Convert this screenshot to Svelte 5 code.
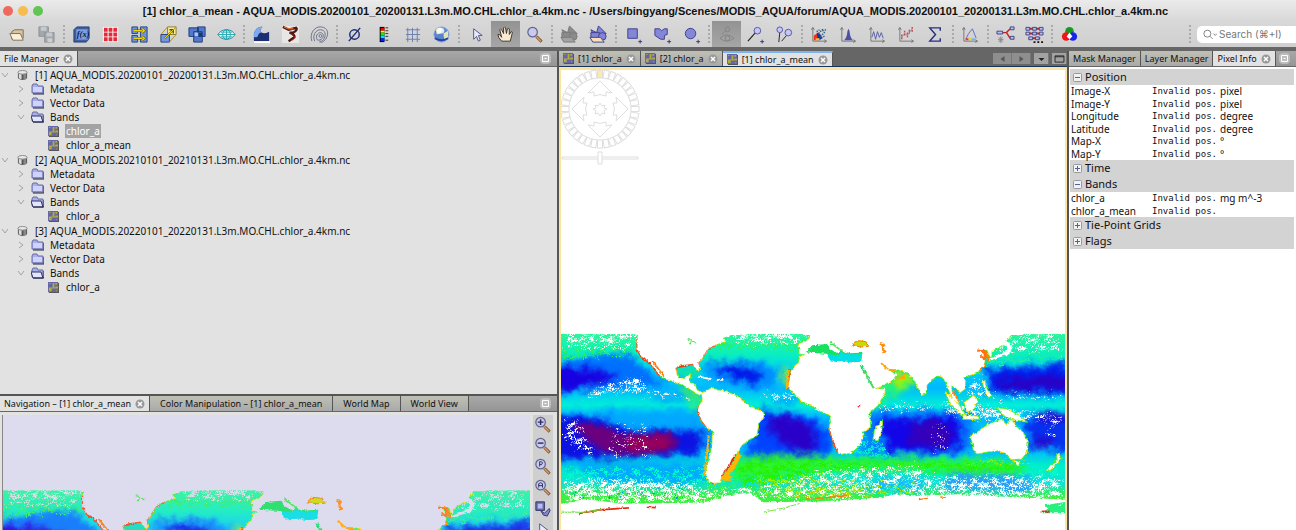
<script lang="ts">
  const file = (year: number) => `AQUA_MODIS.${year}0101_${year}0131.L3m.MO.CHL.chlor_a.4km.nc`;
  const title = `[1] chlor_a_mean - ${file(2020)} - /Users/bingyang/Scenes/MODIS_AQUA/forum/${file(2020)}`;

  const products = [
    { id: 1, name: file(2020), bands: ['chlor_a', 'chlor_a_mean'] },
    { id: 2, name: file(2021), bands: ['chlor_a'] },
    { id: 3, name: file(2022), bands: ['chlor_a'] }
  ];

  let selected = $state('1/chlor_a');
  let search = $state('');

  const pixelInfo = [
    {
      name: 'Position',
      rows: [
        ['Image-X', 'pixel'],
        ['Image-Y', 'pixel'],
        ['Longitude', 'degree'],
        ['Latitude', 'degree'],
        ['Map-X', '°'],
        ['Map-Y', '°']
      ]
    },
    { name: 'Time', rows: [] },
    { name: 'Bands', rows: [['chlor_a', 'mg m^-3'], ['chlor_a_mean', '']] },
    { name: 'Tie-Point Grids', rows: [] },
    { name: 'Flags', rows: [] }
  ];

  const axes = '<path d="M3 3v14h14M1.500 5L3 2.500 4.500 5M15 15.500l2.500 1.500-2.500 1.500" fill="none" stroke="#777"/>';
  const lens = (mark: string) =>
    `<path d="M12 12l5.500 5.500" stroke="#7b4a2a" stroke-width="3"/><path d="M12 12l5 5" stroke="#d9a070" stroke-width="1.500"/><circle cx="8" cy="7.500" r="5" fill="#c9caec" stroke="#62648c" stroke-width="1.300"/>${mark}`;
  const shapes = (main: string, edge: string, tray: string) =>
    `<path d="M2 5l6 3 2-7 8 8H4z" fill="${main}" stroke="${edge}"/><path d="M2 8h9v6H2z" fill="${main}" stroke="${edge}"/><circle cx="14" cy="12" r="4" fill="${main}" stroke="${edge}"/><path d="M1 13h11l4 5H4z" fill="${tray}" stroke="${edge}"/>`;
  const plus = '<path d="M15 17.500h4M17 15.500v4" stroke="#33357a"/>';

  const icons: Record<string, string> = {
    open: '<path d="M4 15V7l3-2h9v9" fill="#d9c3a0" stroke="#7c705c"/><path d="M2 9h11l3 7H5z" fill="#fbf0d8" stroke="#7c705c"/>',
    save: '<g fill="#a3a8ad" stroke="#90959a"><path d="M2 2h10v10H2z"/><path d="M8 8h10v10H8z"/></g><path d="M4 2h6v4H4zM10 8h6v4h-6z" fill="#c5cace"/><path d="M11 14h5v4h-5z" fill="#ccd0d3"/>',
    math: '<path d="M2 5l3-3h13v12l-3 4H2z" fill="#3d5c9c" stroke="#28427c"/><path d="M4 4h13v12H4z" fill="#7c9fe0" stroke="#3c5a9c"/><text x="5" y="13" font-size="9" font-style="italic" font-weight="bold" font-family="Liberation Serif, serif" fill="#10204c">f(x)</text>',
    mosaic: '<path d="M2 2h16v16H2z" fill="#fff"/><g fill="#e22c38"><path d="M3 3h4v4H3zM8 3h4v4H8zM13 3h4v4h-4zM3 8h4v4H3zM8 8h4v4H8zM13 8h4v4h-4zM3 13h4v4H3zM8 13h4v4H8zM13 13h4v4h-4z"/></g>',
    collocate: '<g fill="#6f93dc" stroke="#27427e"><path d="M2 2h6v7H2zM2 11h6v7H2zM11 2h7v16h-7z"/></g><path d="M4 6h9m0-2l2 2-2 2M4 14h9m0-2l2 2-2 2" fill="none" stroke="#5f5200" stroke-width="2.500"/><path d="M4 6h9m0-2l2 2-2 2M4 14h9m0-2l2 2-2 2" fill="none" stroke="#f5d800" stroke-width="1.500"/>',
    reproject: '<path d="M9 2h9v8h-9z" fill="#f7ec9a" stroke="#8a7c30"/><path d="M2 10h9v8H2z" fill="#7197e6" stroke="#27427e"/><path d="M2 10l7-8M11 18l7-8M11 10l7-8" stroke="#a8922a"/><path d="M6 14l9-9m0 0h-4m4 0v4" stroke="#5f5200" stroke-width="1.500" fill="none"/><path d="M6 14l9-9" stroke="#ffe100"/>',
    subset: '<g fill="#5379ca" stroke="#1d3b80"><path d="M1 3h10v9H1zM10 2h8v10h-8zM6 7h9v11H6z"/></g><path d="M7 8h4v4H7z" fill="#a9c5ff"/><path d="M11 8h4v4h-4z" fill="#183879"/>',
    resample: '<path d="M1 10Q4 5 10 5t9 5q-3 5-9 5t-9-5z" fill="#e8ffff" stroke="#228a96"/><ellipse cx="10" cy="10" rx="4" ry="5" fill="none" stroke="#169eab"/><path d="M1 10h18M4 7.500h12M4 12.500h12M10 5v10" stroke="#26a6b1" fill="none"/>',
    water: '<path d="M2 17V9q3-8 9-7-4 3-1 6 3 2 8-1v10z" fill="#1c2f74"/><path d="M2 9q3-8 9-7-4 3-1 6-3 0-4 4-3 2-4 0z" fill="#7ea9ee"/><path d="M2 17h17v2H2z" fill="#fff"/>',
    cloud: '<path d="M1 1h18v18H1z" fill="#e9e6e6"/><path d="M2 2l6 3 8-2q2 2-3 5l-4 0q6 2 5 5l-6 4" fill="none" stroke="#4c1810" stroke-width="2.500"/><path d="M3 2l5 2 5 0" stroke="#d06a33" stroke-width="1.500" fill="none"/><path d="M10 9l5 4-3 3" fill="none" stroke="#bb1d24"/>',
    contour: '<g fill="none" stroke="#697186"><path d="M2 17C-1 9 5 1 12 2s8 7 5 12-5 4-7 4"/><path d="M5 17C2 11 6 5 11 5s6 5 4 9-4 3-5 3"/><path d="M8 16c-3-4 0-8 3-8s4 4 2 6-4 2-5 2z"/><circle cx="11" cy="11.500" r="1.500"/></g>',
    nodata: '<circle cx="10" cy="10" r="5" fill="none" stroke="#1e2c75" stroke-width="1.500"/><path d="M4 17L16 3" stroke="#1e2c75" stroke-width="1.500"/>',
    colorbar: '<path d="M6 2h5v16H6z"/><path d="M7 3h4v3H7z" fill="#f00"/><path d="M7 6h4v2H7z" fill="#ff0"/><path d="M7 8h4v3H7z" fill="#20e020"/><path d="M7 11h4v3H7z" fill="#0df"/><path d="M7 14h4v3H7z" fill="#02f"/><path d="M12 3h3M12 6h3M12 9h3M12 12h3M12 16h3" stroke="#333"/>',
    grid: '<path d="M3 5h15M3 10h15M3 15h15M5 3v15M10 3v15M15 3v15" stroke="#6c7fae"/>',
    globe: '<circle cx="10" cy="10" r="8" fill="#5a82d0" stroke="#8fa5d8"/><path d="M4 5q5-5 7 0l-2 4-4 1zM12 9l5-3v7l-4 3z" fill="#dfe8ae"/><ellipse cx="9" cy="6" rx="4" ry="3" fill="#fff" opacity=".8"/><path d="M3 14q7 4 14 0" stroke="#2244a0" fill="none" stroke-width="2"/>',
    pointer: '<path d="M7 4v11l3-3 2 5 2-1-2-5h4z" fill="#e9e9fb" stroke="#54567f"/>',
    hand: '<path d="M6 17q-4-4-4-7 2-1 4 3L4 5q1-2 2 0l2 4V3q1-2 2 0l1 6 1-5q2-1 2 0v6l2-3q2 0 1 2l-2 8z" fill="#f8ead3" stroke="#3c352c"/>',
    zoom: lens(''),
    importGrey: shapes('#8b8b8b', '#7a7a7a', '#a2a2a2'),
    importShape: shapes('#8083d8', '#3e408c', '#f8e0b4'),
    rect: '<path d="M4 4h10v10H4z" fill="#8486d8" stroke="#3e408c"/>' + plus,
    polygon: '<path d="M2 4h5l2 2 3-2h3v6l-3 1v4H8l-6-4z" fill="#8486d8" stroke="#3e408c"/>' + plus,
    circle: '<circle cx="9" cy="9" r="5.500" fill="#8486d8" stroke="#3e408c"/>' + plus,
    eye: '<g fill="none" stroke="#858585"><path d="M5 10l5-5"/><circle cx="11" cy="4.500" r="2.500"/><path d="M3 14q7-7 15 0-8 6-15 0z"/><circle cx="11" cy="14" r="2.500"/></g>',
    pin: '<path d="M2 17l8-9" stroke="#222" stroke-width="1.200"/><circle cx="12" cy="6" r="3.500" fill="#c4c6f6" stroke="#5254a2"/>' + plus,
    pins: '<path d="M4 18l1-10M7 17l6-7" stroke="#222"/><circle cx="5" cy="5" r="3" fill="#c4c6f6" stroke="#5254a2"/><circle cx="14" cy="8" r="3.500" fill="#c4c6f6" stroke="#5254a2"/>',
    scatter: axes + '<path d="M4 11l5-3 3 4-4 4H4z" fill="#f33116"/><path d="M7 8l4 2 2 4-3 2H8z" fill="#1838a4"/><path d="M6 14h4v2H6z" fill="#ffc41b"/><path d="M9 9l5-5M11 12l5-5M13 6l4-1M12 14l4-3M7 7l3-2" stroke="#2c5f84" stroke-width="1.500" stroke-dasharray="1.500 1"/>',
    histogram: axes + '<path d="M5 16q3-1 4-10l1-2 1 2q1 9 4 10z" fill="#4c51a8"/>',
    profile: axes + '<path d="M4 13l2-6 2 8 2-8 2 6 2-5 2 6" fill="none" stroke="#5a60a8"/>',
    spectrum: axes + '<path d="M5 13l3-4 3 2 5-7" fill="none" stroke="#999"/><path d="M5 10v5M8 6v6M11 8v6M13 5v4M16 2v5" fill="none" stroke="#c04a55" stroke-width="1.500" stroke-dasharray="2 1"/>',
    sigma: '<path d="M15 6V3H4l6 7-6 7h11v-3" fill="none" stroke="#25307e" stroke-width="1.500"/>',
    density: axes + '<path d="M5 15l3-6 4-5 4 10" fill="none" stroke="#6767d0"/><path d="M5 15h3" stroke="#e33" stroke-width="2"/><path d="M8 15h3" stroke="#ed0" stroke-width="2"/><path d="M11 15h4" stroke="#6bf" stroke-width="2"/>',
    graph: '<path d="M7 8h4l4-4M11 8l4 6" stroke="#c52020" stroke-width="1.500" fill="none"/><g fill="#b9bdf2" stroke="#414683"><path d="M1 6.500h6v3H1zM15 2h4v3h-4zM15 12h4v3h-4z"/></g><path d="M5 12v7M2 15.500h6M3 13l4 5M7 13l-4 5" stroke="#888"/>',
    batch: '<path d="M2 4h15M2 9h15M4 14h12" stroke="#c52020" stroke-width="2"/><g fill="#b9bdf2" stroke="#414683"><path d="M1 2.500h4v3H1zM8 2.500h4v3H8zM15 2.500h4v3h-4zM1 7.500h4v3H1zM8 7.500h4v3H8zM15 7.500h4v3h-4zM4 12.500h4v3H4zM11 12.500h4v3h-4z"/></g><path d="M9 18h10" stroke="#111" stroke-width="2" stroke-dasharray="2"/>',
    rgb: '<circle cx="10" cy="6.500" r="4.500" fill="#159a20"/><circle cx="6.500" cy="12" r="4.500" fill="#f01616"/><circle cx="13.500" cy="12" r="4.500" fill="#1724ee"/><path d="M10 8l3 4-3 3-3-3z" fill="#fff"/>'
  };

  const toolbar = [
    ['open', 'save'],
    ['math', 'mosaic', 'collocate', 'reproject', 'subset', 'resample'],
    ['water', 'cloud', 'contour'],
    ['nodata', 'colorbar', 'grid', 'globe'],
    ['pointer', 'hand', 'zoom'],
    ['importGrey', 'importShape'],
    ['rect', 'polygon', 'circle'],
    ['eye', 'pin', 'pins'],
    ['scatter', 'histogram', 'profile', 'spectrum', 'sigma'],
    ['density'],
    ['graph', 'batch'],
    ['rgb']
  ];

  const navTools = [
    ['Zoom in', lens('<path d="M5 7.500h6M8 4.500v6" stroke="#2c2e60" stroke-width="1.500"/>')],
    ['Zoom out', lens('<path d="M5 7.500h6" stroke="#2c2e60" stroke-width="1.500"/>')],
    ['Actual pixels', lens('<path d="M7 10V5h2q2 1 0 3H7" stroke="#2c2e60" fill="none"/>')],
    ['Zoom all', lens('<path d="M6 10V6l2-1 2 1v4M6 8h4" stroke="#2c2e60" fill="none"/>')],
    ['Synchronise', '<path d="M3 3h9v9H3z" fill="#6b6eb8" stroke="#2f3163"/><path d="M5 5h5v5H5z" fill="#b9bbe8"/><path d="M8 12l4 3 5-5 1 2-3 6-4-1z" fill="#8285cf" stroke="#37396e"/>'],
    ['Cursor', icons.pointer]
  ];

  const tickAngles = Array.from({ length: 36 }, (_, i) => i * 10);
</script>

{#snippet closeIcon()}
  <svg class="close" viewBox="0 0 10 10" aria-hidden="true">
    <circle cx="5" cy="5" r="4.500" fill="#999" />
    <path d="M3 3l4 4M7 3l-4 4" stroke="#fff" stroke-width="1.500" />
  </svg>
{/snippet}

{#snippet minimise()}
  <button class="minimise" aria-label="Minimise window group">
    <svg viewBox="0 0 11 11"><rect width="11" height="11" rx="4" fill="#bdbdbd" /><path d="M2.500 2.500h6v6h-6zM4.500 5.500h2" fill="none" stroke="#fff" /></svg>
  </button>
{/snippet}

{#snippet bandIcon()}
  <svg class="band-icon" viewBox="0 0 12 12" aria-hidden="true">
    <path d="M1 1h11v11H1z" fill="#555" />
    <path d="M0 0h11v11H0z" fill="#6467a6" />
    <path d="M1 6h3v4H1zM5 1h2v5H5zM8 5h3v2H8zM8 1h2v2H8zM4 6h4v1H4zM1 1h2v1H1zM9 9h1v1H9z" fill="#b5aa3c" />
  </svg>
{/snippet}

{#snippet folder(open: boolean)}
  <svg class="folder" viewBox="0 0 13 12" aria-hidden="true">
    <path d="M1 10V3l1-2h4l1 2h5v7z" fill="#a9aee8" stroke="#6a6da5" />
    {#if open}
      <path d="M0 5h10l2 6H2z" fill="#e1e5ff" stroke="#31345f" />
    {:else}
      <path d="M2 4h9v5H2z" fill="#cdd2ff" />
    {/if}
    <path d="M2 11h11V4" fill="none" stroke="#20223f" />
  </svg>
{/snippet}

{#snippet chevron(open: boolean)}
  <svg class="chevron" viewBox="0 0 8 8" aria-hidden="true">
    <path d={open ? 'M1 2l3 4 3-4' : 'M2 1l4 3-4 3'} fill="none" stroke="#a3a3a3" />
  </svg>
{/snippet}

{#snippet worldMap()}
  <svg class="world" viewBox="0 0 1521 615" role="img" aria-label="Chlorophyll concentration map">
    <rect y="24" width="1521" height="512" fill="url(#ocean)" />
    <g filter="url(#soft)">
      <path d="M-30 120Q100 75 200 85L290 150 310 185 120 180-30 215z" fill="#0070ff" />
      <path d="M-30 125Q80 120 170 150 120 190-30 200z" fill="#1800e0" />
      <path d="M430 120Q540 85 660 130L640 185Q520 190 430 140z" fill="#008cff" />
      <path d="M455 120Q530 105 610 145 590 185 530 165z" fill="#0018e8" />
      <path d="M1280 130L1551 112V208L1300 205z" fill="#0020ee" />
      <path d="M1300 165L1551 145V188L1340 195z" fill="#2a00c4" />
      <path d="M280 205h140v20H280zM640 210h70v25h-70z" fill="#00a5ff" />
      <path d="M-30 255h440L450 310V340L440 390H-30z" fill="#00a8ff" />
      <path d="M-30 275Q140 265 200 320L420 315Q450 350 410 385L-30 405z" fill="#0c12e2" />
      <path d="M-30 410H460L440 475H160z" fill="#00a8ff" />
      <path d="M590 250L760 275 815 320 820 390H555L570 345z" fill="#0043ff" />
      <path d="M622 270Q700 265 770 310V385Q690 385 630 320z" fill="#2a00c8" />
      <path d="M925 250L1250 255 1235 385 900 390z" fill="#0080ff" />
      <path d="M955 285L1200 270 1210 370Q1140 385 990 380z" fill="#1205e8" />
      <path d="M1050 290h100q60 50 20 75l-110-5z" fill="#3500bb" />
      <path d="M1390 280L1551 265V375L1415 370z" fill="#0630ee" />
      <path d="M1440 260h111v25h-111zM1425 340h60v25h-60z" fill="#2a00c8" />
      <path d="M1180 430q100-10 260 40l-30 35-260-15z" fill="#2a9cff" />
      <path d="M960 460h130v40H900z" fill="#18b6ff" />
      <path d="M540 400q100-15 260 0h290l230 5 90 30-50 15-400-22-400 30-70 20z" fill="#2df52b" />
      <path d="M960 160L1012 147 1070 165 1060 190 1000 210 950 250z" fill="#22f080" />
      <path d="M985 150l60-15 30 25-50 20z" fill="#a8f000" />
      <path d="M340 175l60 15 40 60-10 40-30-60z" fill="#3af060" />
      <path d="M660 140l32-5-5 50z" fill="#b0f000" />
      <path d="M350 125h60v25h-60z" fill="#10e890" />
    </g>
    <g filter="url(#softer)">
      <path d="M40 290Q120 290 180 325L330 322Q370 350 330 380L180 388Q90 380 40 300z" fill="#6b007e" />
      <path d="M200 335h110q40 18 0 35l-100 10z" fill="#96005c" />
    </g>

    <g filter="url(#speckle)">
      <path d="M0 20H230V90L120 100 0 120zM510 24h220v60L600 75 430 90z" fill="#28f060" fill-opacity=".9" />
      <path d="M1290 60L1521 30V110L1270 130z" fill="#1cf0a0" fill-opacity=".9" />
      <path d="M0 420H1521V530H0z" fill="#00ffc8" fill-opacity=".9" />
      <path d="M0 480H420L540 480V540H0z" fill="#40f020" fill-opacity=".95" />
      <path d="M510 400L1400 405V440L760 455 1000 520H560z" fill="#22f000" />
      <path d="M880 320l80 20 60 60H850z" fill="#00ecd0" />
    </g>
    <g filter="url(#speckle2)">
      <path d="M560 440L800 440 1090 470 1060 520H600z" fill="#9cf000" fill-opacity=".85" />
      <path d="M1230 395h190v30h-190zM750 405h180v14H750z" fill="#a4ee00" fill-opacity=".85" />
      <path d="M700 508h240v16H700z" fill="#ffb800" fill-opacity=".95" />
      <path d="M985 140l70-5 20 25-60 20zM340 175h60v22z" fill="#ffa800" fill-opacity=".85" />
      <path d="M20 490H400V530H20z" fill="#0090ff" fill-opacity=".7" />
    </g>
    <g fill="currentColor" filter="url(#speckle)">
      <path d="M0 10H1521V36H0z" />
      <path d="M0 30H225V75H0zM520 30H725V60H520zM1280 40H1521V85H1290z" fill-opacity=".88" />
      <path d="M80 190L240 140 260 185 420 215V230L200 205 60 220z" />
      <path d="M0 270l60 10 20 60 40 50-40 10L0 340z" fill-opacity=".9" />
      <path d="M570 205L700 195 720 230 620 225z" />
      <path d="M570 205L700 195 720 230 620 225z" />
      <path d="M0 460L150 450 420 470 470 495 430 540H0z" />
      <path d="M420 490L640 470 780 430 1090 410 1110 450 900 530H420z" fill-opacity=".9" />
      <path d="M1080 450H1521V530H1000z" fill-opacity=".95" />
      <path d="M1150 220L1330 240 1521 270V300L1400 290 1250 290 1150 265z" />
      <path d="M1290 200H1521V225H1300zM1220 160l60-10 10 70-60 10z" fill-opacity=".9" />
      <path d="M950 230h180v35H940z" fill-opacity=".85" />
      <path d="M1110 290h60v90h-60z" fill-opacity=".65" />
      <path d="M1440 320l50-20 20 30-40 10z" fill-opacity=".9" />
      <path d="M150 290H280V400H120z" fill-opacity=".65" />
    </g>

    <!-- coast halo, then the land itself -->
    <g fill="none" filter="url(#rough)">
      <use href="#land" stroke="#3df02a" stroke-width="7" />
      <use href="#land" stroke="#ffd900" stroke-width="6" stroke-dasharray="10 22" />
      <path d="M231 40v32l12 22 20 12 36 44M415 125l-2-16 14-16 12-22 28-16M345 160v-34l55-12M420 238l-8 18 14 30 14 18M690 130l-5 58M810 308l12 40 16 36M517 400l-14 26-10 10-10 24-30 16" stroke="#f53a10" stroke-width="6" />
      <path d="M688 132l-7 55M446 330l-6 60-8 60M536 215l24 24" stroke="#ffb400" stroke-width="6" />
      <path d="M540 385q-30 60-50 75h24" stroke="#ffb400" stroke-width="14" />
      <path d="M526 388l-24 45" stroke="#e31a10" stroke-width="4" />
      <path d="M990 134l-25-20M1280 75l12 30M1262 132l20-16M1180 195l18 34" stroke="#ff8200" stroke-width="8" />
    </g>
    <g fill="currentColor" filter="url(#rough)">
      <use href="#land" stroke="currentColor" />
      <path d="M-20 545L70 522 200 538 430 533 500 512 570 502 610 532 780 530 960 518 1010 508 1080 512 1200 508 1541 525V640H-20z" />
      <path d="M415 150l40 8-4 5-40-8zM470 160h20v5h-20z" />
      <path d="M1340 42l25 20-15 25-30 8-25 10 2-8 25-10 22-10 4-14-14-12z" />
    </g>
    <g filter="url(#rough)">
      <path d="M738 80l20-22 45-4 10 16 22 12 12-8 25 8 38-2-4 26-30 2-25-4-35 2-15-22z" fill="#18e060" />
      <path d="M800 84l30 4 15-8 30 6 34-2-4 24-30 2-25-4-35 2z" fill="#00dfe5" />
      <path d="M812 48l38 30" stroke="#40e850" stroke-width="5" />
      <path d="M880 60l10-16 30 3 12 14-25 2z" fill="#c8dc00" stroke="#f47a10" stroke-width="3" />
      <path d="M962 48l16 6-4 12 10 14-14 2-2-16z" fill="#ff8b10" />
      <path d="M904 118l40 70" stroke="#18dc70" stroke-width="6" />
      <path d="M916 140l28 46" stroke="#ffb800" stroke-width="2" />
      <path d="M966 112l22 20 24 2" fill="none" stroke="#ffa500" stroke-width="6" />
      <path d="M895 243l8-6-2 9z" fill="#e22" stroke="#e22" />
      <path d="M378 38l14 4M390 56l4-14 14 10" fill="none" stroke="#42e04c" stroke-width="3" />
      <path d="M1256 74l22 2 2 24-14-10" fill="none" stroke="#ff7010" stroke-width="6" />
      <path d="M275 105l35 45" stroke="#ff7a00" stroke-width="5" />
      <path d="M55 566l60-11 90-6M258 547l28 1" stroke="#e62c10" stroke-width="5" fill="none" />
      <path d="M0 562h70l50-8M610 562l60-12 50-14" stroke="#6ee040" stroke-width="3" fill="none" />
      <path d="M1450 565l20-14-10-10 61-10v34z" fill="#25f080" />
      <path d="M1450 560h25" stroke="#f31f10" stroke-width="6" />
      <path d="M740 522l60-4 70-6M1080 524l24-4M1145 516l16 1" stroke="#ff7a00" stroke-width="4" fill="none" />
    </g>
    <g fill="currentColor" filter="url(#speckle)">
      <path d="M1455 552L1521 525V550z" />
      <path d="M20 525h420v16H20z" />
    </g>
    <path d="M225 0h315v27H225zM730 0h665v27H730z" fill="currentColor" />
  </svg>
{/snippet}

<svg class="defs" aria-hidden="true">
  <defs>
    <linearGradient id="ocean" x1="0" y1="0" x2="0" y2="1">
      <stop offset="0" stop-color="#2af59a" />
      <stop offset=".12" stop-color="#0aefc0" />
      <stop offset=".22" stop-color="#00d0f5" />
      <stop offset=".32" stop-color="#00b8ff" />
      <stop offset=".42" stop-color="#00f0d8" />
      <stop offset=".5" stop-color="#00baff" />
      <stop offset=".7" stop-color="#00c2f8" />
      <stop offset=".78" stop-color="#00f0c8" />
      <stop offset=".88" stop-color="#10e0d8" />
      <stop offset=".96" stop-color="#3cf040" />
    </linearGradient>
    <filter id="soft" x="-5%" y="-5%" width="110%" height="110%" color-interpolation-filters="sRGB">
      <feTurbulence type="fractalNoise" baseFrequency=".03" numOctaves="4" seed="4" result="n" />
      <feGaussianBlur in="SourceGraphic" stdDeviation="11" />
      <feDisplacementMap in2="n" scale="40" xChannelSelector="R" yChannelSelector="G" />
    </filter>
    <filter id="softer" x="-15%" y="-25%" width="130%" height="150%" color-interpolation-filters="sRGB">
      <feTurbulence type="fractalNoise" baseFrequency=".05" numOctaves="4" seed="8" result="n" />
      <feGaussianBlur in="SourceGraphic" stdDeviation="8" />
      <feDisplacementMap in2="n" scale="30" xChannelSelector="R" yChannelSelector="G" />
    </filter>
    <filter id="rough" x="-5%" y="-5%" width="110%" height="110%" color-interpolation-filters="sRGB">
      <feTurbulence type="fractalNoise" baseFrequency=".12" numOctaves="2" seed="3" result="n" />
      <feDisplacementMap in="SourceGraphic" in2="n" scale="10" xChannelSelector="R" yChannelSelector="G" />
    </filter>
    {#each [['speckle', 5], ['speckle2', 12]] as [id, seed]}
      <filter {id} x="-5%" y="-10%" width="110%" height="120%" color-interpolation-filters="sRGB">
        <feTurbulence type="fractalNoise" baseFrequency=".05 .08" numOctaves="5" {seed} result="wide" />
        <feTurbulence type="fractalNoise" baseFrequency=".23" numOctaves="2" {seed} result="fine" />
        <feComposite in="wide" in2="fine" operator="arithmetic" k1="0" k2=".5" k3=".5" k4="0" result="n" />
        <feGaussianBlur in="SourceGraphic" stdDeviation="9" result="b" />
        <feComposite in="b" in2="n" operator="arithmetic" k1="0" k2=".2" k3=".6" k4="0" />
        <feComponentTransfer result="a"><feFuncA type="linear" slope="14" intercept="-6.600" /></feComponentTransfer>
        <feComponentTransfer in="b" result="c"><feFuncA type="linear" slope="20" intercept="0" /></feComponentTransfer>
        <feComposite in="c" in2="a" operator="in" />
      </filter>
    {/each}
    <path
      id="land"
      d="M232 5L231 70 243 92 262 103 300 150 315 158 370 178 392 192 418 208 428 203 410 194 404 178 388 168 388 148 372 160 352 157 345 127 362 118 398 114 410 132 418 130 414 110 426 98 440 72 462 58 495 46 488 36 512 28 512 5z
      M425 205L455 187 475 195 500 197 515 207 535 213 560 237 585 250 610 262 611 275 595 295 590 330 562 345 545 360 530 385 515 400 505 425 492 435 484 455 478 472 455 473 441 462 438 440 446 410 455 370 460 318 440 305 425 285 413 255 417 240 428 225z
      M755 5L750 40 718 55 720 82 738 86 720 95 718 110 695 135 690 160 686 185 700 200 725 225 760 242 790 260 812 268 815 290 810 310 822 345 838 385 875 383 895 365 908 345 910 320 933 305 930 262 955 240 975 205 978 190 945 190 965 182 1000 163 1012 147 990 135 1012 130 1045 140 1062 155 1075 180 1090 207 1101 203 1102 180 1120 160 1135 150 1150 152 1165 175 1176 206 1195 237 1200 232 1180 200 1176 178 1190 185 1205 200 1218 190 1220 165 1213 152 1230 150 1260 135 1275 120 1280 100 1268 72 1285 70 1298 95 1300 75 1330 60 1350 38 1370 5z
      M968 290L966 318 956 345 944 340 948 312z
      M1238 332L1260 320 1285 300 1310 290 1330 283 1345 300 1358 283 1375 305 1395 325 1408 350 1405 380 1390 400 1360 402 1345 385 1320 375 1290 378 1255 385 1247 375z
      M1370 410l14 2-6 10z
      M1218 232l25-20 14 10-12 30-20 5z
      M1165 205l30 25 22 35-10 2-35-40zM1215 270l45 5v5h-45zM1318 248l30 4 35 20 18 15-30-5-28-8z
      M1276 165l10 30 10 15-6 4-14-30z
      M1498 388l10 10-8 10zM1496 405l4 5-25 24-10 2z"
    />
  </defs>
</svg>

<div class="window">
  <header>
    <div class="lights"><i class="red"></i><i class="amber"></i><i class="green"></i></div>
    <h1>{title}</h1>
  </header>

  <div class="toolbar" role="toolbar" aria-label="Tools">
    {#each toolbar as group, i}
      {#if i > 0}<span class="separator"></span>{/if}
      {#each group as name}
        <button class="tool" class:active={name === 'hand' || name === 'eye'} aria-label={name}>
          <svg viewBox="0 0 20 20">{@html icons[name]}</svg>
        </button>
      {/each}
    {/each}
    <span class="separator search-separator"></span>
    <label class="search">
      <svg viewBox="0 0 16 12" aria-hidden="true">
        <path d="M8 8l3 3M12 5l2 2 2-2" fill="none" stroke="#777" /><circle cx="5" cy="5" r="4" fill="none" stroke="#777" />
      </svg>
      <input type="search" aria-label="Search" placeholder="Search (⌘+I)" bind:value={search} />
    </label>
  </div>

  <main>
    <div class="left">
      <section class="files">
        <div class="tabs">
          <button class="tab current">File Manager {@render closeIcon()}</button>
          {@render minimise()}
        </div>
        <ul class="tree">
          {#each products as product}
            <li class="product">
              <div class="row">
                {@render chevron(true)}
                <svg class="cylinder" viewBox="0 0 12 12" aria-hidden="true">
                  <path d="M1 2v7q5 4 10 0V2z" fill="#555" /><path d="M2 3v6l3 1V4z" fill="#ddd" /><path d="M7 4h3v6l-3 1z" fill="#888" />
                  <ellipse cx="6" cy="2.500" rx="5" ry="2" fill="#e8e8e8" stroke="#888" />
                </svg>
                <span>[{product.id}] {product.name}</span>
              </div>
              <div class="row level1">{@render chevron(false)}{@render folder(false)}<span>Metadata</span></div>
              <div class="row level1">{@render chevron(false)}{@render folder(false)}<span>Vector Data</span></div>
              <div class="row level1">{@render chevron(true)}{@render folder(true)}<span>Bands</span></div>
              {#each product.bands as band}
                {@const key = `${product.id}/${band}`}
                <div class="row level2">
                  {@render bandIcon()}
                  <button class="band" class:selected={selected === key} onclick={() => (selected = key)}>{band}</button>
                </div>
              {/each}
            </li>
          {/each}
        </ul>
      </section>

      <section class="navigation">
        <div class="tabs">
          <button class="tab current">Navigation – [1] chlor_a_mean {@render closeIcon()}</button>
          <button class="tab wide">Color Manipulation – [1] chlor_a_mean</button>
          <button class="tab wide">World Map</button>
          <button class="tab wide">World View</button>
          {@render minimise()}
        </div>
        <div class="nav-body">
          <div class="nav-map">{@render worldMap()}</div>
          <div class="nav-tools">
            {#each navTools as [label, icon]}
              <button aria-label={label}><svg viewBox="0 0 20 20">{@html icon}</svg></button>
            {/each}
          </div>
        </div>
      </section>
    </div>

    <section class="editor">
      <div class="tabs dark">
        <button class="tab">{@render bandIcon()} [1] chlor_a {@render closeIcon()}</button>
        <button class="tab">{@render bandIcon()} [2] chlor_a {@render closeIcon()}</button>
        <button class="tab current">{@render bandIcon()} [1] chlor_a_mean {@render closeIcon()}</button>
        <div class="tab-nav">
          <button aria-label="Previous tab"><svg viewBox="0 0 8 8"><path d="M6 1v6L2 4z" /></svg></button>
          <button aria-label="Next tab"><svg viewBox="0 0 8 8"><path d="M2 1v6l4-3z" /></svg></button>
          <button class="list" aria-label="Show tab list"><svg viewBox="0 0 8 8"><path d="M1 3h6L4 6z" fill="#222" /></svg></button>
          <button class="list" aria-label="Maximise"><svg viewBox="0 0 12 9"><path d="M1 1h10v7H1zM1 2h10" fill="none" stroke="#222" /></svg></button>
        </div>
      </div>
      <div class="canvas">
        {@render worldMap()}
        <svg class="compass" viewBox="0 0 80 96" aria-hidden="true">
          <g fill="none" stroke="#dedede">
            {#each tickAngles as angle}
              <rect x="37.500" y="1" width="5" height="8" transform="rotate({angle} 40 40)" fill={angle === 0 ? '#fbe9b4' : 'none'} />
            {/each}
            {#each [0, 90, 180, 270] as angle}
              <path d="M40 12l12 12-6-1v4q-6-3-12 0v-4l-6 1z" transform="rotate({angle} 40 40)" />
            {/each}
            <path d="M40 34l2 3 3-1-1 3 3 1-3 2 1 3-3-1-2 3-2-3-3 1 1-3-3-2 3-1-1-3 3 1z" />
            <path d="M2 88h76v2H2z" /><path d="M38 83h4v12h-4z" fill="#fff" />
          </g>
        </svg>
      </div>
    </section>

    <section class="info">
      <div class="tabs">
        <button class="tab">Mask Manager</button>
        <button class="tab">Layer Manager</button>
        <button class="tab current">Pixel Info {@render closeIcon()}</button>
        {@render minimise()}
      </div>
      <div class="info-body">
        {#each pixelInfo as group}
          <h2>
            <button>
              <svg viewBox="0 0 9 9" aria-hidden="true">
                <rect x=".5" y=".5" width="8" height="8" rx="1" fill="#f2f2f2" stroke="#999" />
                <path d={group.rows.length ? 'M2 4.500h5' : 'M2 4.500h5M4.500 2v5'} stroke="#4c62a8" />
              </svg>
              {group.name}
            </button>
          </h2>
          {#if group.rows.length}
            <table>
              <tbody>
                {#each group.rows as [name, unit]}
                  <tr><th scope="row">{name}</th><td class="value">Invalid pos.</td><td>{unit}</td></tr>
                {/each}
              </tbody>
            </table>
          {/if}
        {/each}
      </div>
    </section>
  </main>
</div>

<style>
  :global(body) {
    margin: 0;
    background: #666;
  }

  .defs {
    position: absolute;
    width: 0;
    height: 0;
  }

  .window {
    display: flex;
    flex-direction: column;
    height: 100vh;
    overflow: hidden;
    font-family: 'Noto Sans', 'Open Sans', sans-serif;
    font-size: 10px;
    color: #111;
  }

  button {
    font: inherit;
    color: inherit;
    border: none;
    padding: 0;
    background: none;
  }

  svg {
    display: block;
    flex: none;
  }

  header {
    display: flex;
    flex: none;
    align-items: center;
    height: 21px;
    background: linear-gradient(#ebebeb, #d8d8d8);
  }

  .lights {
    display: flex;
    gap: 5px;
    padding-left: 3px;
  }

  .lights i {
    width: 10px;
    height: 10px;
    border-radius: 50%;
  }

  .red {
    background: #ee6a5f;
  }

  .amber {
    background: #f5bd4f;
  }

  .green {
    background: #61c554;
  }

  h1 {
    flex: 1;
    margin: 0;
    padding-right: 28px;
    font: bold 11px 'Liberation Sans', Arial, sans-serif;
    text-align: center;
    white-space: nowrap;
  }

  .toolbar {
    display: flex;
    flex: none;
    align-items: center;
    height: 26px;
    padding-left: 3px;
    background: linear-gradient(#d8d8d8, #cfcfcf);
    border-bottom: 4px solid #666;
  }

  .tool {
    display: flex;
    flex: none;
    align-items: center;
    justify-content: center;
    width: 29px;
    height: 26px;
  }

  .tool.active {
    background: linear-gradient(#939393, #a6a6a6);
  }

  .tool svg {
    width: 19px;
    height: 19px;
  }

  .separator {
    flex: none;
    height: 18px;
    margin: 0 2px;
    border-left: 2px dotted #aaa;
  }

  .search-separator {
    margin: 0 6px 0 auto;
  }

  .search {
    display: flex;
    align-items: center;
    width: 93px;
    height: 17px;
    padding-left: 6px;
    border-radius: 5px 0 0 5px;
    background: #fff;
  }

  .search svg {
    width: 14px;
    height: 11px;
  }

  .search input {
    flex: 1;
    min-width: 0;
    padding: 0 0 0 2px;
    border: none;
    outline: none;
    background: none;
    font: 10px Inter, 'DejaVu Sans', sans-serif;
  }

  .search input::placeholder {
    color: #777;
  }

  main {
    display: grid;
    flex: 1;
    grid-template-columns: 557fr 508fr 227fr;
    gap: 2px;
    min-height: 0;
    background: #555;
  }

  section,
  .left {
    display: flex;
    flex-direction: column;
    min-width: 0;
    min-height: 0;
  }

  .left {
    gap: 2px;
  }

  .files {
    flex: 343;
    background: #e2e2e2;
  }

  .navigation {
    flex: 134;
    background: #e2e2e2;
  }

  .tabs {
    display: flex;
    flex: none;
    align-items: stretch;
    height: 15px;
    background: linear-gradient(#a8a8a8, #959595);
    border-bottom: 1px solid #666;
    font-size: 9px;
  }

  .tab {
    display: flex;
    align-items: center;
    gap: 4px;
    padding: 0 4px;
    border-right: 1px solid #555;
    background: linear-gradient(#bfc0b4, #a9a9a9);
    white-space: nowrap;
  }

  .tab.wide {
    padding: 0 10px;
  }

  .tab.current {
    background: #e2e2e2;
  }

  .dark {
    background: #666;
    border-color: #16335a;
  }

  .dark .tab.current {
    border-top: 2px solid #7db4ee;
  }

  .close {
    width: 10px;
    height: 10px;
  }

  .minimise {
    margin: 0 6px 0 auto;
  }

  .minimise svg {
    width: 11px;
    height: 11px;
  }

  .band-icon {
    width: 11px;
    height: 11px;
  }

  .tree {
    margin: 0;
    padding: 1px 0 0;
    list-style: none;
  }

  .product {
    margin-bottom: 1px;
  }

  .row {
    display: flex;
    align-items: center;
    height: 14px;
    line-height: 14px;
    white-space: nowrap;
  }

  .chevron {
    width: 8px;
    height: 8px;
    margin: 0 8px 0 1px;
  }

  .cylinder {
    width: 11px;
    height: 11px;
    margin-right: 7px;
  }

  .level1 {
    padding-left: 16px;
  }

  .folder {
    width: 13px;
    height: 12px;
    margin: 0 6px 0 -2px;
  }

  .level2 {
    gap: 6px;
    padding-left: 48px;
  }

  .band {
    height: 14px;
    padding: 0 1px;
  }

  .band.selected {
    background: #a3a3a3;
    color: #fff;
  }

  .nav-body {
    display: flex;
    flex: 1;
    gap: 3px;
    min-height: 0;
    padding: 3px 4px 0 2px;
  }

  .nav-map {
    flex: 1;
    min-width: 0;
    padding-top: 67px;
    overflow: hidden;
    border-left: 1px solid #888;
    background: #dddcee;
    color: #dddcee;
  }

  .nav-map .world {
    opacity: 0.88;
  }

  .nav-tools {
    display: flex;
    flex-direction: column;
    width: 20px;
    gap: 2px;
    overflow: hidden;
    background: #cfcfcf;
  }

  .nav-tools svg {
    width: 19px;
    height: 19px;
  }

  .tab-nav {
    display: flex;
    align-items: center;
    margin-left: auto;
  }

  .tab-nav button {
    display: flex;
    align-items: center;
    justify-content: center;
    width: 19px;
    height: 11px;
    border-right: 1px solid #777;
    background: #8e8e8e;
    fill: #555;
  }

  .tab-nav .list {
    width: 15px;
    margin-left: 3px;
    background: #a2a2a2;
  }

  .tab-nav svg {
    width: 11px;
    height: 8px;
  }

  .canvas {
    position: relative;
    flex: 1;
    min-height: 0;
    overflow: hidden;
    display: flex;
    flex-direction: column;
    justify-content: flex-end;
    box-sizing: border-box;
    border: solid #fbe3a0;
    border-width: 3px 2px 0;
    background: #fff;
    color: #fff;
  }

  .world {
    width: 100%;
  }

  .compass {
    position: absolute;
    top: -1px;
    left: -1px;
    width: 80px;
    height: 96px;
  }

  .info {
    background: #fff;
  }

  .info-body {
    flex: 1;
    padding: 2px 2px 0 1px;
  }

  h2 {
    margin: 0;
    height: 16px;
    background: #d3d3d3;
    font-size: 11px;
    font-weight: normal;
    line-height: 16px;
  }

  h2 button {
    display: flex;
    align-items: center;
    gap: 3px;
    height: 16px;
    padding-left: 3px;
  }

  h2 svg {
    width: 9px;
    height: 9px;
  }

  table {
    width: 100%;
    border-collapse: collapse;
    table-layout: fixed;
    line-height: 12px;
    white-space: nowrap;
  }

  tr {
    height: 12px;
  }

  tr:nth-child(even) {
    height: 13px;
  }

  th,
  td {
    padding: 0 0 0 1px;
    font-weight: normal;
    text-align: left;
  }

  th {
    width: 80px;
  }

  .value {
    width: 67px;
    font-family: 'DejaVu Sans Mono', monospace;
    font-size: 9px;
  }
</style>
